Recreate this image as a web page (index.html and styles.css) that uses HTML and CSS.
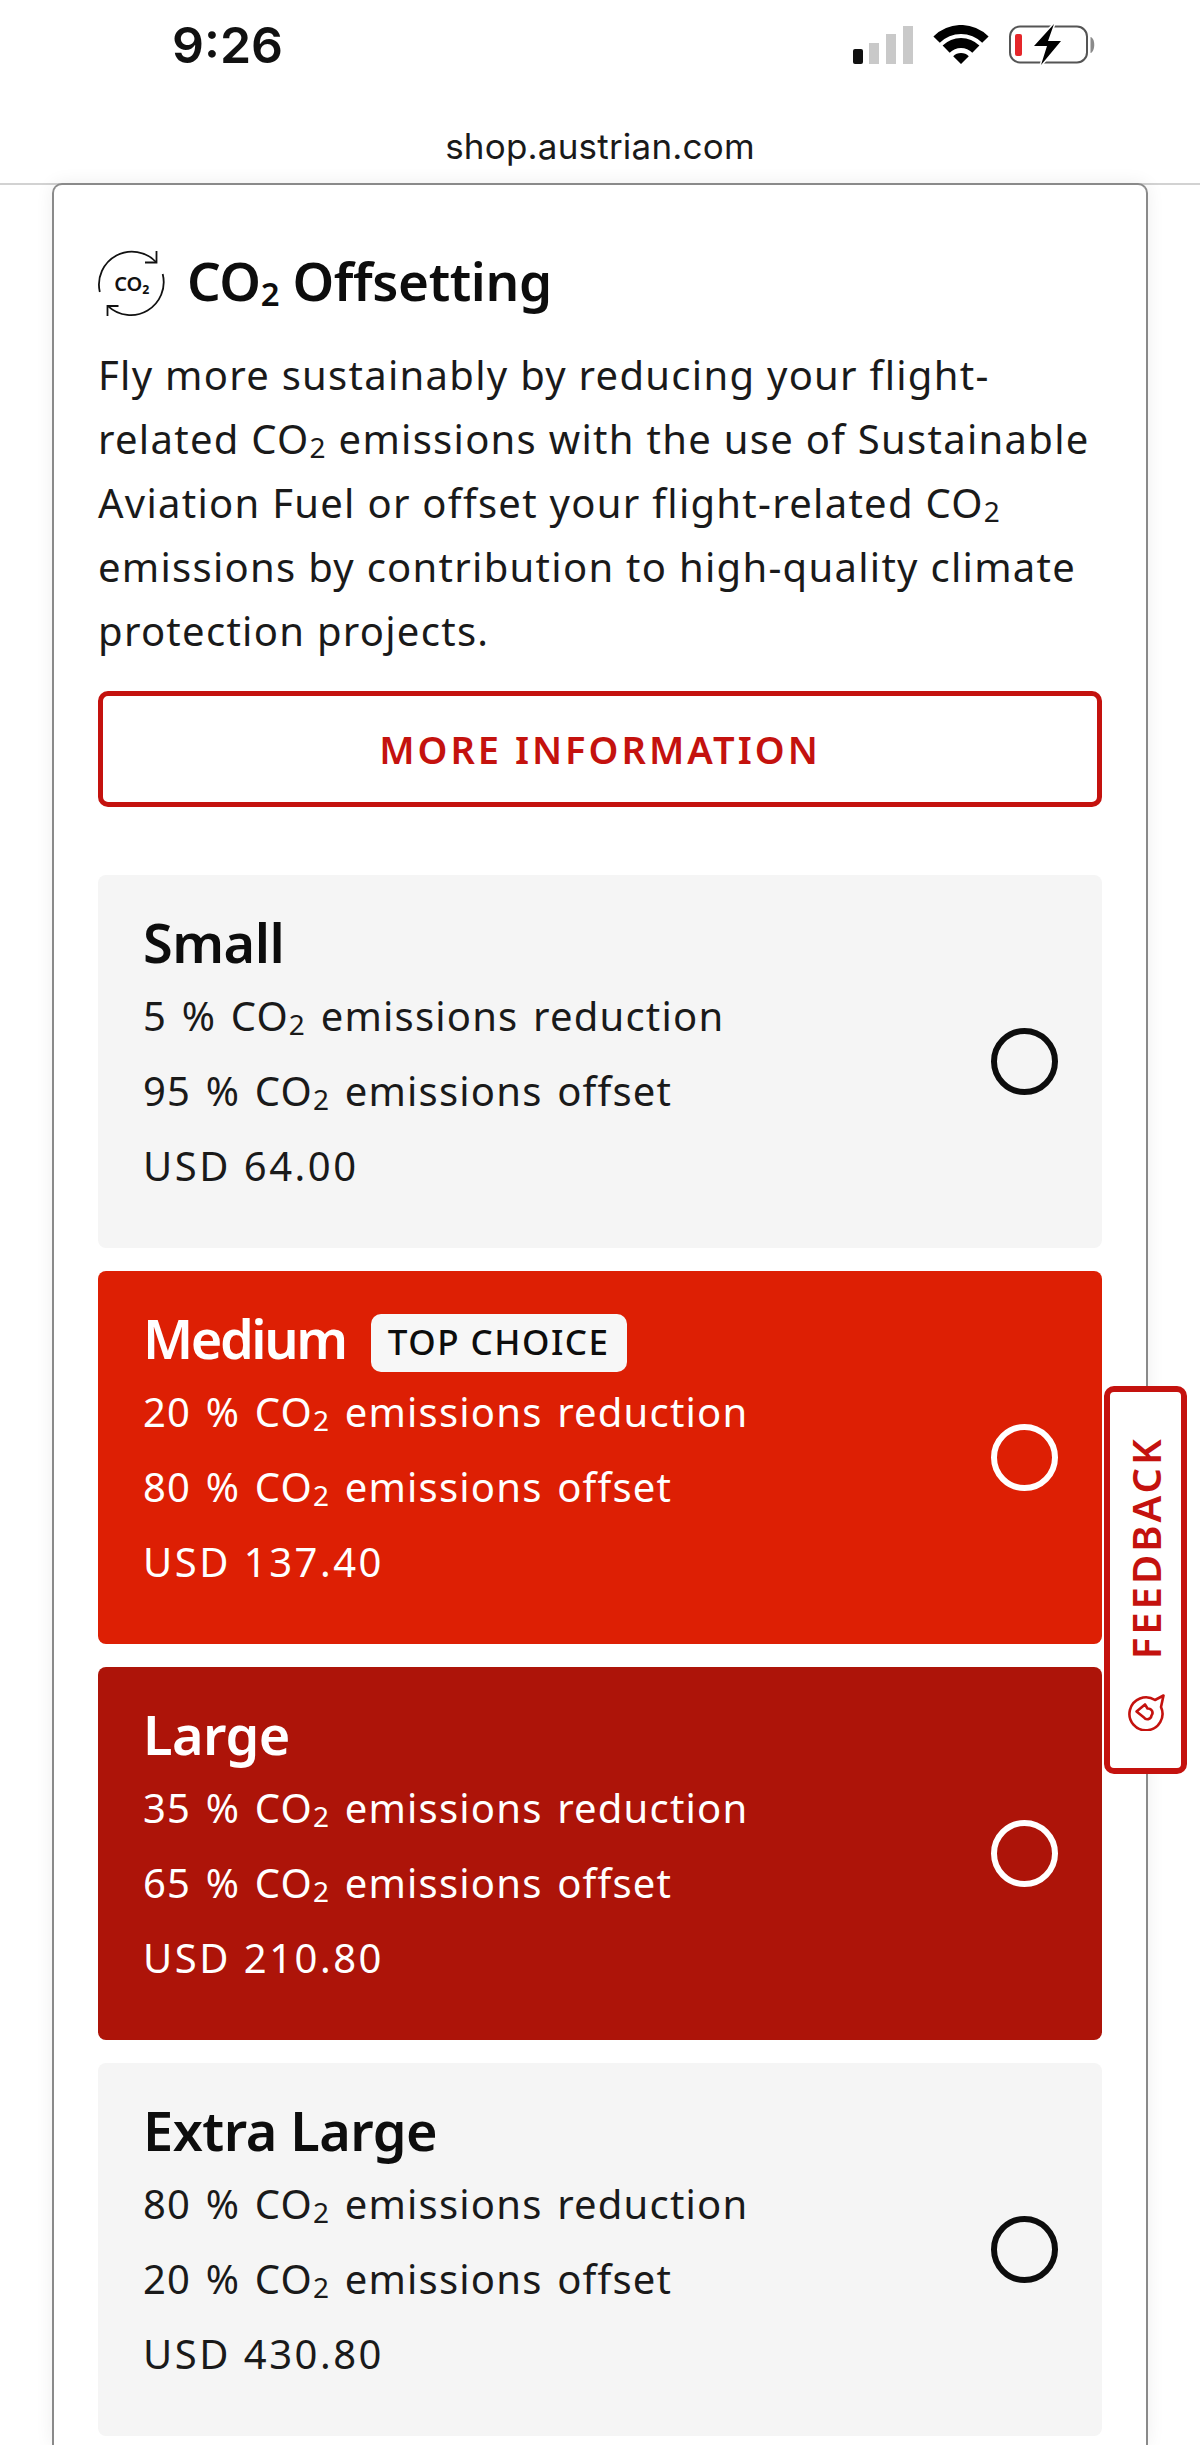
FILE: index.html
```html
<!DOCTYPE html>
<html lang="en">
<head>
<meta charset="utf-8">
<title>CO2 Offsetting</title>
<link rel="stylesheet" href="styles.css">
</head>
<body>
<header class="top">
  <div class="status">
    <span class="time">9:26</span>
    <div class="status-icons">
      <svg class="signal" width="60" height="38" viewBox="0 0 60 38"><rect x="0" y="23" width="10" height="15" rx="2" fill="#111"/><rect x="16" y="17" width="10" height="21" fill="#c9c9c9"/><rect x="33" y="8" width="10" height="30" fill="#c9c9c9"/><rect x="50" y="0" width="10" height="38" fill="#c9c9c9"/></svg>
      <svg class="wifi" width="56" height="40" viewBox="-1 0 56 40"><path d="M-.6 11.4A39 39 0 0 1 54.6 11.4L48.2 17.8A30 30 0 0 0 5.8 17.8Z M8.6 20.6A26 26 0 0 1 45.4 20.6L38.3 27.7A16 16 0 0 0 15.7 27.7Z M19.2 31.2A11 11 0 0 1 34.8 31.2L27 39Z" fill="#000"/></svg>
      <svg class="battery" width="86" height="42" viewBox="0 0 86 42"><rect x="1" y="2.5" width="77" height="36" rx="10" fill="none" stroke="#555" stroke-width="2"/><rect x="6" y="10" width="7" height="22" rx="2" fill="#e5262a"/><path d="M81.5 13C86.5 14 86.5 27 81.5 29Z" fill="#8a8a8a"/><path d="M45 0L25 22H38L32 41L52 17H39Z" fill="#000" stroke="#fff" stroke-width="3" paint-order="stroke" stroke-linejoin="round"/></svg>
    </div>
  </div>
  <div class="url">shop.austrian.com</div>
</header>

<main class="card">
  <div class="title-row">
    <svg class="co2-icon" width="68" height="68" viewBox="0 0 68 68"><g fill="none" stroke="#111" stroke-width="1.8"><path d="M1.8 42A33 33 0 0 1 58 12"/><path d="M58.5 1V12.5H47"/><path d="M64.7 24A33 33 0 0 1 10.3 56.3"/><path d="M9.5 66V56H20.5"/></g><text x="34" y="41" text-anchor="middle" class="co2-label">CO₂</text></svg>
    <h1 class="title">CO<sub class="sub">2</sub> Offsetting</h1>
  </div>
  <p class="intro">Fly more sustainably by reducing your flight-related CO<sub class="sub">2</sub> emissions with the use of Sustainable Aviation Fuel or offset your flight-related CO<sub class="sub">2</sub> emissions by contribution to high-quality climate protection projects.</p>
  <a class="more">MORE INFORMATION</a>

  <div class="options">
    <section class="option">
      <div class="option-text">
        <div class="name-row"><h2 class="name">Small</h2></div>
        <p class="line">5 % CO<sub class="sub">2</sub> emissions reduction</p>
        <p class="line">95 % CO<sub class="sub">2</sub> emissions offset</p>
        <p class="line price">USD 64.00</p>
      </div>
      <span class="radio"></span>
    </section>
    <section class="option medium">
      <div class="option-text">
        <div class="name-row"><h2 class="name">Medium</h2><span class="badge">TOP CHOICE</span></div>
        <p class="line">20 % CO<sub class="sub">2</sub> emissions reduction</p>
        <p class="line">80 % CO<sub class="sub">2</sub> emissions offset</p>
        <p class="line price">USD 137.40</p>
      </div>
      <span class="radio"></span>
    </section>
    <section class="option large">
      <div class="option-text">
        <div class="name-row"><h2 class="name">Large</h2></div>
        <p class="line">35 % CO<sub class="sub">2</sub> emissions reduction</p>
        <p class="line">65 % CO<sub class="sub">2</sub> emissions offset</p>
        <p class="line price">USD 210.80</p>
      </div>
      <span class="radio"></span>
    </section>
    <section class="option">
      <div class="option-text">
        <div class="name-row"><h2 class="name">Extra Large</h2></div>
        <p class="line">80 % CO<sub class="sub">2</sub> emissions reduction</p>
        <p class="line">20 % CO<sub class="sub">2</sub> emissions offset</p>
        <p class="line price">USD 430.80</p>
      </div>
      <span class="radio"></span>
    </section>
  </div>
</main>

<aside class="feedback">
  <span class="feedback-label">FEEDBACK</span>
  <svg class="feedback-icon" width="38" height="38" viewBox="0 0 38 38"><g fill="none" stroke="#c4120e" stroke-width="2.6" stroke-linejoin="round"><path d="M28 7A16.5 16.5 0 1 0 34 14L36.5 2.5Z"/><path d="M9.5 18.5L18 11.5L20.5 15.5C24.5 15 27 19.5 24.5 22.5C24 26.5 19 27.5 17 24.5Z"/></g></svg>
</aside>
</body>
</html>
```

FILE: styles.css
```css
* { box-sizing: border-box; }
html, body { margin: 0; padding: 0; }
body {
  position: relative;
  width: 1200px;
  height: 2445px;
  overflow: hidden;
  background: #fff;
  color: #111;
  font-family: "Noto Sans", "Liberation Sans", sans-serif;
}
h1, h2, p { margin: 0; font-weight: 400; }

.top { height: 185px; border-bottom: 2px solid #d2d2d2; }
.status {
  display: flex;
  justify-content: space-between;
  align-items: center;
  height: 90px;
  padding: 0 105px 0 172px;
}
.time {
  font-family: Inter, "Liberation Sans", sans-serif;
  font-size: 50px;
  font-weight: 600;
  color: #111;
}
.status-icons { display: flex; align-items: center; gap: 20px; }
.signal, .wifi, .battery { display: block; }
.url {
  padding-top: 34px;
  text-align: center;
  font-family: Inter, "Liberation Sans", sans-serif;
  font-size: 35px;
  line-height: 44px;
  letter-spacing: .2px;
  color: #1a1a1a;
}

.card {
  margin: -2px 52px 0;
  padding: 66px 44px 0;
  height: 2262px;
  background: #fff;
  border: 2px solid #8a8a8a;
  border-bottom: 0;
  border-radius: 10px 10px 0 0;
  box-shadow: 0 0 18px rgba(0, 0, 0, .07);
}
.sub { font-size: .7em; line-height: 0; vertical-align: -.14em; }
.title-row { display: flex; align-items: center; gap: 21px; height: 66px; }
.co2-icon { display: block; flex: none; }
.co2-label { font-size: 20px; font-weight: 600; fill: #111; }
.title { font-size: 53px; line-height: 66px; font-weight: 600; letter-spacing: -.4px; color: #0d0d0d; margin-top: -6px; }
.title .sub { font-size: .62em; }
.intro {
  margin-top: 26px;
  font-size: 40px;
  line-height: 64px;
  letter-spacing: 1.28px;
  color: #1a1a1a;
}
.more {
  display: block;
  margin-top: 28px;
  height: 116px;
  border: 5px solid #c4120e;
  border-radius: 10px;
  text-align: center;
  font-size: 38px;
  font-weight: 600;
  line-height: 106px;
  letter-spacing: 3px;
  color: #c4120e;
}

.options { display: flex; flex-direction: column; gap: 23px; margin-top: 68px; }
.option {
  display: flex;
  align-items: center;
  justify-content: space-between;
  height: 373px;
  padding: 0 44px 0 45px;
  background: #f5f5f5;
  border-radius: 8px;
}
.option-text { display: flex; flex-direction: column; margin-top: -14px; }
.name-row { display: flex; align-items: center; gap: 25px; height: 72px; }
.name { font-size: 54px; font-weight: 600; letter-spacing: -.5px; line-height: 72px; color: #0d0d0d; }
.line { font-size: 40px; line-height: 75px; letter-spacing: 1.2px; word-spacing: 3px; color: #1a1a1a; }
.price { letter-spacing: 2.5px; word-spacing: 0; }
.radio {
  flex: none;
  width: 67px;
  height: 67px;
  border: 6px solid #0d0d0d;
  border-radius: 50%;
}
.medium { background: #dd1f04; }
.large { background: #ad1409; }
.medium .name, .medium .line, .large .name, .large .line { color: #fff; }
.medium .name { letter-spacing: -2.4px; }
.medium .radio, .large .radio { border-color: #fff; }
.badge {
  height: 58px;
  margin-top: 10px;
  padding: 0 17px;
  background: #f7f7f7;
  border-radius: 10px;
  font-size: 35px;
  font-weight: 500;
  line-height: 56px;
  letter-spacing: 1.5px;
  color: #0d0d0d;
}

.feedback {
  position: absolute;
  top: 1386px;
  left: 1104px;
  width: 83px;
  height: 388px;
  display: flex;
  flex-direction: column;
  align-items: center;
  justify-content: space-between;
  padding: 44px 0 37px;
  background: #fff;
  border: 6px solid #c4120e;
  border-radius: 10px;
}
.feedback-label {
  writing-mode: vertical-rl;
  transform: rotate(180deg);
  font-size: 40px;
  font-weight: 600;
  line-height: 40px;
  letter-spacing: 3px;
  color: #c4120e;
}
.feedback-icon { display: block; flex: none; }
```
